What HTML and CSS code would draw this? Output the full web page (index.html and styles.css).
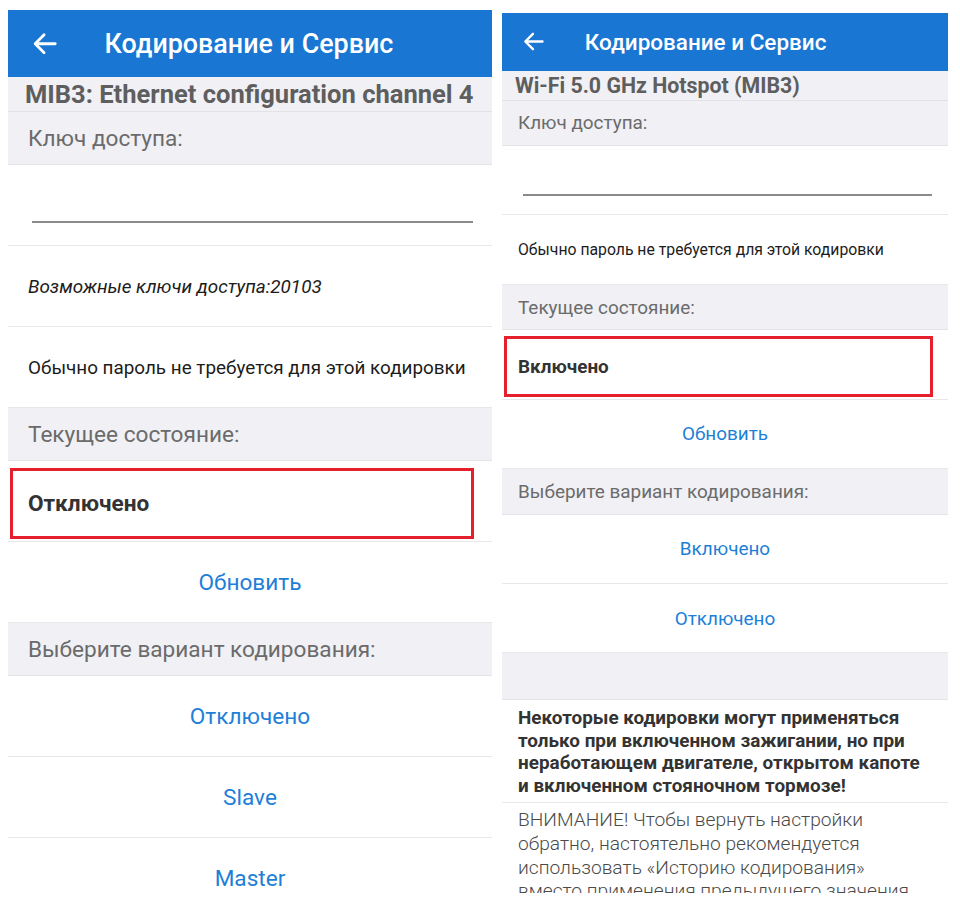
FILE: index.html
```html
<!DOCTYPE html>
<html lang="ru">
<head>
<meta charset="utf-8">
<title>Кодирование и Сервис</title>
<link rel="stylesheet" href="styles.css">
</head>
<body>
<div class="screens">
  <section class="phone phone-a">
    <header class="appbar">
      <svg class="back" viewBox="0 0 24 24"><path d="M20 12H5M11.5 5.2L4.7 12l6.8 6.8"/></svg>
      <h1>Кодирование и Сервис</h1>
    </header>
    <div class="caption">MIB3: Ethernet configuration channel 4</div>
    <div class="label">Ключ доступа:</div>
    <div class="row input-row"><div class="field"></div></div>
    <div class="row note italic">Возможные ключи доступа:20103</div>
    <div class="row note">Обычно пароль не требуется для этой кодировки</div>
    <div class="label">Текущее состояние:</div>
    <div class="row status"><div class="highlight">Отключено</div></div>
    <div class="row action">Обновить</div>
    <div class="label">Выберите вариант кодирования:</div>
    <div class="row action">Отключено</div>
    <div class="row action">Slave</div>
    <div class="row action">Master</div>
  </section>

  <section class="phone phone-b">
    <header class="appbar">
      <svg class="back" viewBox="0 0 24 24"><path d="M20 12H5M11.5 5.2L4.7 12l6.8 6.8"/></svg>
      <h1>Кодирование и Сервис</h1>
    </header>
    <div class="caption">Wi-Fi 5.0 GHz Hotspot (MIB3)</div>
    <div class="label">Ключ доступа:</div>
    <div class="row input-row"><div class="field"></div></div>
    <div class="row note">Обычно пароль не требуется для этой кодировки</div>
    <div class="label">Текущее состояние:</div>
    <div class="row status"><div class="highlight">Включено</div></div>
    <div class="row action">Обновить</div>
    <div class="label">Выберите вариант кодирования:</div>
    <div class="row action">Включено</div>
    <div class="row action">Отключено</div>
    <div class="spacer"></div>
    <div class="notice notice-strong">Некоторые кодировки могут применяться только при включенном зажигании, но при неработающем двигателе, открытом капоте и включенном стояночном тормозе!</div>
    <div class="notice notice-light">ВНИМАНИЕ! Чтобы вернуть настройки обратно, настоятельно рекомендуется использовать «Историю кодирования» вместо применения предыдущего значения.</div>
  </section>
</div>
</body>
</html>
```

FILE: styles.css
```css
* { box-sizing: border-box; }

html, body {
  margin: 0;
  padding: 0;
  background: #ffffff;
}

.screens {
  display: flex;
  align-items: flex-start;
  gap: 10px;
  padding-left: 8px;
}

.phone {
  display: flex;
  flex-direction: column;
  overflow: hidden;
  background: #ffffff;
  font-family: Roboto, "Noto Sans", sans-serif;
  color: #1c1c1c;
}

/* --u drives box sizes, --f drives type sizes */
.phone-a {
  --u: 21px;
  --f: 22.6px;
  --pad: 20px;
  width: 484px;
  height: 893px;
  margin-top: 10px;
}

.phone-b {
  --u: 18px;
  --f: 18.9px;
  --pad: 16px;
  width: 446px;
  height: 880px;
  margin-top: 13px;
}

.phone > * { flex: none; }

/* App bar */
.appbar {
  height: calc(var(--u) * 3.2);
  background: #1976d2;
  color: #ffffff;
  display: flex;
  align-items: center;
  padding-left: calc(var(--u) * 1);
}

.back {
  width: calc(var(--u) * 1.5);
  height: calc(var(--u) * 1.5);
  fill: none;
  stroke: #ffffff;
  stroke-width: 2.1;
  stroke-linecap: round;
  stroke-linejoin: round;
}

.appbar h1 {
  margin: 0 0 0 calc(var(--u) * 2.1);
  font-size: calc(var(--f) * 1.19);
  font-weight: 500;
  white-space: nowrap;
}

/* Section caption */
.caption {
  height: calc(var(--u) * 1.667);
  background: #f0f0f5;
  border-bottom: 1px solid #e1e1e6;
  display: flex;
  align-items: center;
  padding-left: calc(var(--pad) - 3px);
  font-size: calc(var(--f) * 1.13);
  font-weight: 700;
  color: #5e5e5e;
  white-space: nowrap;
}

/* Grey group labels */
.label {
  height: calc(var(--u) * 2.524);
  background: #f0f0f5;
  border-bottom: 1px solid #e4e4e8;
  display: flex;
  align-items: center;
  padding-left: var(--pad);
  font-size: calc(var(--f) * 1);
  color: #6b6b6b;
}

/* White rows */
.row {
  height: calc(var(--u) * 3.857);
  border-bottom: 1px solid #e8e8ea;
  display: flex;
  align-items: center;
  padding-left: var(--pad);
}

.input-row {
  align-items: flex-start;
  padding: 0 calc(var(--u) * 0.9) 0 calc(var(--u) * 1.14);
}

.field {
  width: 100%;
  margin-top: calc(var(--u) * 2.68);
  border-bottom: 2px solid #8a8a8a;
}

.note {
  font-size: calc(var(--f) * 0.835);
  color: #1c1c1c;
  white-space: nowrap;
}

.italic { font-style: italic; }

.status {
  padding: calc(var(--u) * 0.33) calc(var(--u) * 0.86) calc(var(--u) * 0.1) 2px;
  align-items: stretch;
}

.highlight {
  flex: 1;
  border: 3px solid #e3202b;
  display: flex;
  align-items: center;
  padding-left: calc(var(--pad) - 5px);
  font-size: calc(var(--f) * 1.0);
  font-weight: 700;
  color: #333333;
}

.action {
  justify-content: center;
  padding-left: 0;
  font-size: calc(var(--f) * 1);
  color: #1e7fd8;
}

.spacer {
  height: 47px;
  background: #f0f0f5;
  border-bottom: 1px solid #e4e4e8;
}

.notice-strong {
  padding: 7px 20px 5px var(--pad);
  font-size: 18.9px;
  line-height: 22.5px;
  font-weight: 700;
  color: #333333;
  border-bottom: 1px solid #e8e8ea;
}

.notice-light {
  padding: 5px 26px 0 var(--pad);
  font-size: 19.2px;
  line-height: 23.6px;
  font-weight: 300;
  color: #4a4a4a;
}
```
